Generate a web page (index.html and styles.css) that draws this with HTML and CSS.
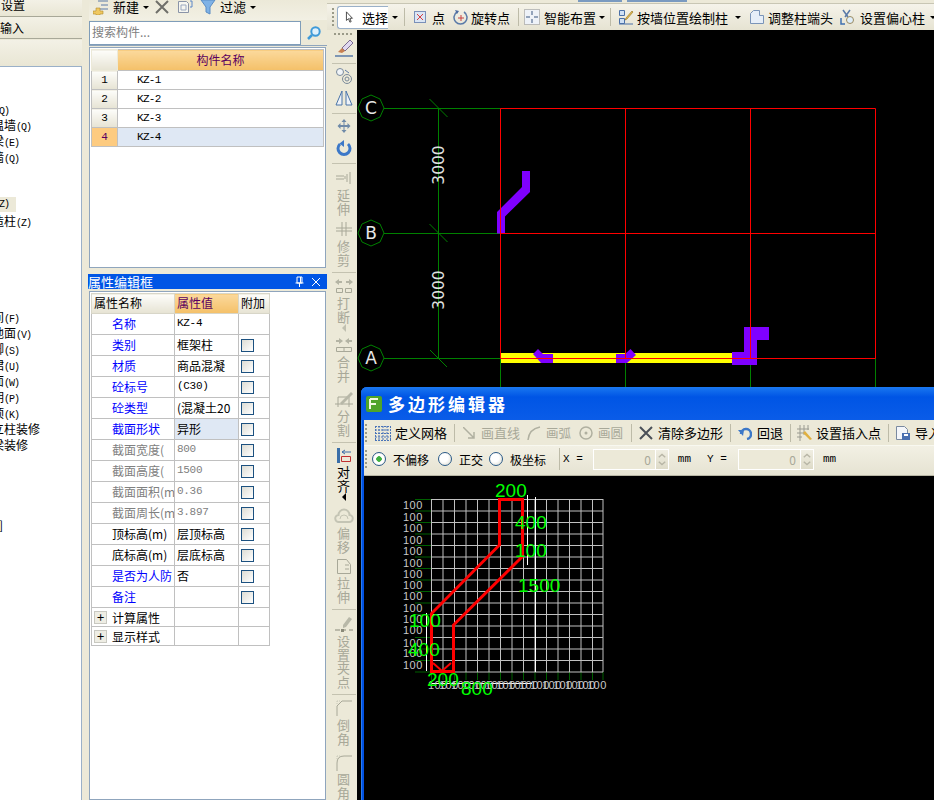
FILE: index.html
```html
<!DOCTYPE html>
<html lang="zh">
<head>
<meta charset="utf-8">
<title>多边形编辑器</title>
<link rel="stylesheet" href="styles.css">
</head>
<body>
<div class="app">
  <aside class="left">
    <div class="tab tab-a"><span>设置</span></div>
    <div class="tab tab-b"><span>输入</span></div>
    <div class="tab tab-c"></div>
    <div class="tree">
      <div class="row clip-b"><span class="lat">Q)</span></div>
      <div class="row clip-a">温墙<span class="lat">(Q)</span></div>
      <div class="row clip-a">梁<span class="lat">(E)</span></div>
      <div class="row clip-a">墙<span class="lat">(Q)</span></div>
      <div class="row"></div><div class="row"></div>
      <div class="row clip-b"><span class="sel lat">Z)</span></div>
      <div class="row clip-a">造柱<span class="lat">(Z)</span></div>
      <div class="row"></div><div class="row"></div><div class="row"></div><div class="row"></div><div class="row"></div>
      <div class="row clip-a">间<span class="lat">(F)</span></div>
      <div class="row clip-a">地面<span class="lat">(V)</span></div>
      <div class="row clip-a">脚<span class="lat">(S)</span></div>
      <div class="row clip-a">裙<span class="lat">(U)</span></div>
      <div class="row clip-a">面<span class="lat">(W)</span></div>
      <div class="row clip-a">期<span class="lat">(P)</span></div>
      <div class="row clip-a">顶<span class="lat">(K)</span></div>
      <div class="row clip-a">立柱装修</div>
      <div class="row clip-a">梁装修</div>
      <div class="row"></div><div class="row"></div><div class="row"></div><div class="row"></div>
      <div class="row clip-b">]</div>
    </div>
  </aside>

  <section class="mid">
    <div class="mid-bar">
      <svg class="ic16" viewBox="0 0 16 16"><path d="M5 2h10M8 6h7M5 10h10" stroke="#5a7aa8" fill="none"/><path d="M3 9h4v3h3v3H7v1H3v-1H0v-3h3z" fill="#f0c860" stroke="#b08a30" stroke-width=".6"/></svg>
      <span class="mb-text">新建</span><i class="caret"></i>
      <svg class="ic14 gap-x" viewBox="0 0 14 14"><path d="M1 1l12 12M13 1L1 13" stroke="#6f6f6a" stroke-width="2"/></svg>
      <svg class="ic16 gap-c" viewBox="0 0 16 16"><path d="M1.500 2.500h8l2 2v9h-10z" fill="#f6f6f0" stroke="#8a94a8"/><path d="M4 6h5v5H4z" fill="none" stroke="#9aa8c0"/><path d="M13 2h2v6h-2" fill="none" stroke="#5b86c8"/></svg>
      <svg class="ic16 gap-f" viewBox="0 0 16 16"><path d="M1 1h14L10 8v7l-4-2V8z" fill="#7fb2e6" stroke="#5a8cc4"/></svg>
      <span class="mb-text">过滤</span><i class="caret"></i>
    </div>
    <div class="search">
      <div class="search-input">搜索构件...</div>
      <div class="search-btn"><svg class="ic16" viewBox="0 0 16 16"><circle cx="9.500" cy="6.500" r="4.200" fill="#dff0fb" stroke="#3f9ad8" stroke-width="2"/><path d="M6 10l-4 4" stroke="#3f9ad8" stroke-width="2.500"/></svg></div>
    </div>
    <div class="list-panel">
      <table class="list">
        <tr><th class="corner"></th><th class="head">构件名称</th></tr>
        <tr><td class="num">1</td><td class="name">KZ-1</td></tr>
        <tr><td class="num">2</td><td class="name">KZ-2</td></tr>
        <tr><td class="num">3</td><td class="name">KZ-3</td></tr>
        <tr><td class="num cur">4</td><td class="name curname">KZ-4</td></tr>
      </table>
    </div>
    <div class="title-bar">
      <span>属性编辑框</span>
      <svg class="pin" viewBox="0 0 12 12"><path d="M4 1h5v6H4zM2.500 7h8M6.500 7v4M7.500 1v6" stroke="#fff" fill="none"/></svg>
      <svg class="pin" viewBox="0 0 12 12"><path d="M2 2l8 8M10 2l-8 8" stroke="#fff"/></svg>
    </div>
    <div class="prop-panel">
      <table class="prop">
        <colgroup><col class="c1"><col class="c2"><col class="c3"></colgroup>
        <tr class="ph"><th class="p-corner">属性名称</th><th class="head">属性值</th><th class="p-corner">附加</th></tr>
        <tr><td class="k blue">名称</td><td class="v mono">KZ-4</td><td></td></tr>
        <tr><td class="k blue">类别</td><td class="v">框架柱</td><td><i class="cb"></i></td></tr>
        <tr><td class="k blue">材质</td><td class="v">商品混凝</td><td><i class="cb"></i></td></tr>
        <tr><td class="k blue">砼标号</td><td class="v mono">(C30)</td><td><i class="cb"></i></td></tr>
        <tr><td class="k blue">砼类型</td><td class="v">(混凝土20</td><td><i class="cb"></i></td></tr>
        <tr><td class="k blue">截面形状</td><td class="v active">异形</td><td><i class="cb"></i></td></tr>
        <tr><td class="k grey">截面宽度(</td><td class="v mono grey">800</td><td><i class="cb"></i></td></tr>
        <tr><td class="k grey">截面高度(</td><td class="v mono grey">1500</td><td><i class="cb"></i></td></tr>
        <tr><td class="k grey">截面面积(m</td><td class="v mono grey">0.36</td><td><i class="cb"></i></td></tr>
        <tr><td class="k grey">截面周长(m</td><td class="v mono grey">3.897</td><td><i class="cb"></i></td></tr>
        <tr><td class="k">顶标高(m)</td><td class="v">层顶标高</td><td><i class="cb"></i></td></tr>
        <tr><td class="k">底标高(m)</td><td class="v">层底标高</td><td><i class="cb"></i></td></tr>
        <tr><td class="k blue">是否为人防</td><td class="v">否</td><td><i class="cb"></i></td></tr>
        <tr><td class="k blue">备注</td><td class="v"></td><td><i class="cb"></i></td></tr>
        <tr class="short"><td class="exp"><div class="exp-in"><i class="plus">+</i>计算属性</div></td><td></td><td></td></tr>
        <tr class="short"><td class="exp"><div class="exp-in"><i class="plus">+</i>显示样式</div></td><td></td><td></td></tr>
      </table>
    </div>
  </section>

  <section class="right">
    <div class="top-strip"><i class="blip b1"></i><i class="blip b2"></i></div>
    <div class="top-bar">
      <i class="grip"></i>
      <div class="sel-btn"><svg class="ic12" viewBox="0 0 12 14"><path d="M3 1v10l2.500-2 1.500 4 1.500-.6L7 8.500h3z" fill="#fff" stroke="#333"/></svg><span>选择</span></div>
      <i class="caret c-sel"></i><i class="sep s-a"></i>
      <svg class="ic12" viewBox="0 0 12 12"><rect x=".5" y=".5" width="11" height="11" fill="#dbe6f4" stroke="#7a90b8"/><path d="M3 3l6 6M9 3l-6 6" stroke="#d84040"/></svg>
      <span class="tt m-6">点</span>
      <svg class="ic16 m-rot" viewBox="0 0 16 16"><path d="M4 3a6.500 6.500 0 1 0 7 0" fill="none" stroke="#5a7aa8" stroke-width="1.500"/><path d="M8 6v6M5 9h6" stroke="#c84040"/><path d="M2 1l4 1-2 3z" fill="#4a6aa0"/></svg>
      <span class="tt m-2">旋转点</span><i class="sep s-b"></i>
      <svg class="ic16" viewBox="0 0 16 16"><rect x=".5" y=".5" width="15" height="15" fill="#eef2f8" stroke="#8a8a8a" stroke-dasharray="1 1"/><path d="M8 2v4M8 10v4M2 8h4M10 8h4" stroke="#39557f"/></svg>
      <span class="tt m-4">智能布置</span><i class="caret c-a"></i><i class="sep s-c"></i>
      <svg class="ic16" viewBox="0 0 16 16"><path d="M1.500 1.500h5v5h-5zM1.500 9.500h5v5h-5z" fill="#cfe0f4" stroke="#4a70a8"/><path d="M1 15h14" stroke="#4a70a8"/><path d="M8 9l6-7 1 1-6 7-2 1z" fill="#e8c050" stroke="#8a6a20" stroke-width=".6"/></svg>
      <span class="tt m-3">按墙位置绘制柱</span><i class="caret c-b"></i>
      <svg class="ic16 m-adj" viewBox="0 0 16 16"><path d="M1.500 4.500l3-3h6v5h4v8h-13z" fill="#e6eef8" stroke="#7a94b8"/></svg>
      <span class="tt m-3">调整柱端头</span>
      <svg class="ic16 m-set" viewBox="0 0 16 16"><path d="M3 1l5 7M10 1L5 8" stroke="#5a7aa8" stroke-width="1.500"/><circle cx="10" cy="11" r="3.500" fill="#dfeefa" stroke="#9a8a60"/><path d="M1 9v6h4" fill="none" stroke="#3f70b0" stroke-width="1.500"/></svg>
      <span class="tt m-4">设置偏心柱</span><i class="caret c-c"></i>
    </div>
    <div class="work">
      <nav class="vbar">
        <i class="vgrip"></i>
        <div class="vb"><svg class="vi" viewBox="0 0 20 20"><path d="M8 10l8-8 3 3-8 8z" fill="#e0d8f0" stroke="#7a6a90"/><path d="M4 14l4-4 3 3-3 2z" fill="#c88050"/><path d="M1 18h18" stroke="#5a7aa8" stroke-width="1.500"/></svg></div>
        <i class="vsep"></i>
        <div class="vb"><svg class="vi" viewBox="0 0 20 20"><circle cx="6" cy="6" r="3.500" fill="#f0f4f8" stroke="#7a8a9a"/><path d="M11 4l4 3" stroke="#5a7aa8"/><circle cx="13" cy="13" r="4.500" fill="none" stroke="#7a8a9a"/><circle cx="13" cy="13" r="2" fill="none" stroke="#7a8a9a"/></svg></div>
        <div class="vb"><svg class="vi" viewBox="0 0 20 20"><path d="M8 3L2 17h6zM12 3l6 14h-6z" fill="#eef2f8" stroke="#4a74a8"/></svg></div>
        <i class="vsep"></i>
        <div class="vb"><svg class="vi" viewBox="0 0 20 20"><path d="M10 3l2.500 3h-2v3h3V7l3 3-3 3v-2h-3v3h2L10 17l-2.500-3h2v-3h-3v2l-3-3 3-3v2h3V6h-2z" fill="#6f8aa8"/></svg></div>
        <div class="vb"><svg class="vi" viewBox="0 0 20 20"><path d="M6 6a6 6 0 1 0 8 0" fill="none" stroke="#3c78c8" stroke-width="3"/><path d="M10 2v7L5.500 5.500z" fill="#3c78c8"/></svg></div>
        <i class="vsep"></i>
        <div class="vb off mt2"><svg class="vi" viewBox="0 0 20 20"><path d="M2 8h8M2 11h8M13 6v8M16 4v12M11 8v3" stroke="#a8a898" fill="none"/></svg><b>延伸</b></div>
        <div class="vb off mt1"><svg class="vi" viewBox="0 0 20 20"><path d="M2 9h16M2 12h16" stroke="#a8a898"/><path d="M8 3v14M12 3v14" stroke="#a8a898"/></svg><b>修剪</b></div>
        <i class="vsep"></i>
        <div class="vb off mt1"><svg class="vi" viewBox="0 0 20 20"><path d="M1 6l4-3v2h3v2H5v2zM19 6l-4-3v2h-3v2h3v2z" fill="#b4b4a4"/><path d="M2.500 12.500h6v4h-6zM11.500 12.500h6v4h-6z" fill="none" stroke="#a8a898"/></svg><b>打断</b><i class="vcaret"></i></div>
        <div class="vb off"><svg class="vi" viewBox="0 0 20 20"><path d="M9 6L5 3v2H2v2h3v2zM11 6l4-3v2h3v2h-3v2z" fill="#b4b4a4"/><path d="M2.500 12.500h15v4h-15zM10 12v5" fill="none" stroke="#a8a898"/></svg><b>合并</b></div>
        <div class="vb off mt4"><svg class="vi" viewBox="0 0 20 20"><path d="M1 15h18M4 8h11M4 8v10M15 8v10" stroke="#a8a898" fill="none"/><path d="M6 14L17 3l2 2-11 11z" fill="#b8b8a8"/></svg><b>分割</b></div>
        <i class="vsep"></i>
        <div class="vb on"><svg class="vi" viewBox="0 0 20 20"><path d="M3 3h3v15H3z" fill="#3a6ea8"/><path d="M8 7h9M8 7l3-2M8 7l3 2" stroke="#3a6ea8" fill="none"/><path d="M7.500 11.500h9v5h-9z" fill="none" stroke="#c03030"/></svg><b>对齐</b><i class="vcaret dark"></i></div>
        <div class="vb off mt2"><svg class="vi" viewBox="0 0 20 20"><path d="M5 16a3.500 3.500 0 0 1-.5-7 5.500 5.500 0 0 1 11 0 3.500 3.500 0 0 1-.5 7z" fill="none" stroke="#c4c4b4" stroke-width="2"/><path d="M6 13a4 4 0 0 1 8 0" fill="none" stroke="#c4c4b4"/></svg><b>偏移</b></div>
        <div class="vb off"><svg class="vi" viewBox="0 0 20 20"><path d="M3.500 3.500h9l4 5v9h-13z" fill="none" stroke="#a8a898"/><path d="M11 9h4M11 13h4" stroke="#a8a898"/></svg><b>拉伸</b></div>
        <i class="vsep"></i>
        <div class="vb off mt2"><svg class="vi" viewBox="0 0 20 20"><path d="M9 11l6-8 3 2-6 8-3 1z" fill="#b8b8a8"/><path d="M1 16h5M9 16h3M15 16h4" stroke="#8a8a7a"/><rect x="7" y="15" width="3" height="3" fill="#8a8a7a"/></svg><b>设置夹点</b></div>
        <i class="vsep"></i>
        <div class="vb off mt1"><svg class="vi" viewBox="0 0 20 20"><path d="M3 18V8l5-5h10" fill="none" stroke="#a8a898"/><path d="M3 3h4M3 3v4" stroke="#c8c8b8" stroke-dasharray="1 1"/></svg><b>倒角</b></div>
        <div class="vb off mt4"><svg class="vi" viewBox="0 0 20 20"><path d="M3 19V11q0-7 7-7h8" fill="none" stroke="#a8a898"/><path d="M3 4h4M3 4v4" stroke="#c8c8b8" stroke-dasharray="1 1"/></svg><b>圆角</b></div>
      </nav>
      <div class="canvas">
        <svg class="plan" viewBox="357 30 577 770">
          <g stroke="#008000" fill="none">
            <path d="M384 108.500H501M384 233.500H501M384 358.500H501M438.500 108V358M500.500 358V390M625.500 358V390M750.500 358V390M875.500 358V390"/>
            <path d="M429.500 99l18 18M429.500 224l18 18M430 350l17 17"/>
            <path d="M371 95l9 4 4 9-4 9-9 4-9-4-4-9 4-9zM371 220l9 4 4 9-4 9-9 4-9-4-4-9 4-9zM371 345l9 4 4 9-4 9-9 4-9-4-4-9 4-9z"/>
          </g>
          <rect x="501" y="353" width="232" height="10" fill="#ffff00"/>
          <g fill="#7f00ff">
            <path d="M522 171h8v21l-25 24.500v17h-8V212l25-25z"/>
            <path d="M744 327h25v13h-12v25h-25v-13h12z"/>
            <path d="M538 349l-5 5 8 9h12v-9h-10z"/>
            <path d="M630.500 349l5.500 6-9 8h-11v-9h9z"/>
          </g>
          <path d="M500.500 108.500H875.500V358.500H500.500zM625.500 108V358M750.500 108V358M500 233.500H875" fill="none" stroke="#ff0000"/>
          <g class="axis-t">
            <text x="371" y="114">C</text><text x="371" y="239">B</text><text x="371" y="364">A</text>
          </g>
          <g class="dim-t">
            <text transform="translate(444 165) rotate(-90)">3000</text>
            <text transform="translate(444 290) rotate(-90)">3000</text>
          </g>
        </svg>
      </div>
    </div>

    <div class="dialog">
      <header class="dlg-title">
        <svg class="dlg-logo" viewBox="0 0 16 16"><rect width="16" height="16" rx="2" fill="#4fa428"/><path d="M4 3v10M4 8h6M4 3h8" stroke="#f0f8e0" stroke-width="2" fill="none"/></svg>
        <span>多边形编辑器</span>
      </header>
      <div class="dlg-bar b-1">
        <i class="grip"></i>
        <svg class="ic16 d-grid" viewBox="0 0 16 16"><path d="M.5 1v14M4 1v14M8 1v14M12 1v14M15.500 1v14M0 1.500h16M0 5h16M0 8.500h16M0 12h16M0 15.500h16" stroke="#4a74b8" stroke-dasharray="2 1"/></svg>
        <span class="tt m-4">定义网格</span><i class="sep s-d"></i>
        <svg class="ic12" viewBox="0 0 12 12"><path d="M0 0l11 11M11 5v6H5" stroke="#b0b0a0" fill="none" stroke-width="1.500"/></svg>
        <span class="tt dim m-6">画直线</span>
        <svg class="ic14 d-b" viewBox="0 0 14 14"><path d="M1 14Q2 3 13 1" stroke="#b0b0a0" fill="none" stroke-width="1.500"/></svg>
        <span class="tt dim m-5 ts-12">画弧</span>
        <svg class="ic14 d-c" viewBox="0 0 14 14"><circle cx="7" cy="7" r="6" fill="none" stroke="#b0b0a0" stroke-width="1.500"/><circle cx="7" cy="7" r="1.500" fill="#b0b0a0"/></svg>
        <span class="tt dim m-5 ts-12">画圆</span><i class="sep s-e"></i>
        <svg class="ic14" viewBox="0 0 14 14"><path d="M1 1l12 12M13 1L1 13" stroke="#4a5058" stroke-width="2"/></svg>
        <span class="tt m-5">清除多边形</span><i class="sep s-f"></i>
        <svg class="ic14" viewBox="0 0 14 14"><path d="M3 8a5 5 0 1 1 6 5" fill="none" stroke="#3c78c8" stroke-width="2.500"/><path d="M0 4l6 0-1 6z" fill="#3c78c8"/></svg>
        <span class="tt m-5">回退</span><i class="sep s-g"></i>
        <svg class="ic16" viewBox="0 0 16 16"><path d="M3 0v16M7 0v10M11 0v5M0 4h12M0 8h8M0 12h5" stroke="#9a9a90"/><path d="M8 6l7 8-2 1-7-7z" fill="#e0b040"/></svg>
        <span class="tt m-3">设置插入点</span><i class="sep s-h"></i>
        <svg class="ic16" viewBox="0 0 16 16"><path d="M1.500 1.500h8l3 3v10h-11z" fill="#f4f6fa" stroke="#7a8aa0"/><rect x="7" y="8" width="8" height="7" fill="#4a70b0"/><rect x="9" y="9" width="4" height="2" fill="#fff"/></svg>
        <span class="tt m-4">导入</span>
      </div>
      <div class="dlg-bar b-2">
        <i class="grip"></i>
        <i class="radio checked r-1"></i><span class="tt12 m-7">不偏移</span>
        <i class="radio r-2"></i><span class="tt12 m-7">正交</span>
        <i class="radio r-3"></i><span class="tt12 m-7">极坐标</span>
        <i class="sep s-i"></i>
        <span class="lbl">X =</span>
        <div class="spin"><span>0</span><svg class="arrows" viewBox="0 0 13 19"><path d="M3 7l3.500-3L10 7M3 12l3.500 3L10 12" fill="none" stroke="#b8b6a6" stroke-width="1.500"/></svg></div>
        <span class="lbl u-1">mm</span>
        <span class="lbl u-2">Y =</span>
        <div class="spin"><span>0</span><svg class="arrows" viewBox="0 0 13 19"><path d="M3 7l3.500-3L10 7M3 12l3.500 3L10 12" fill="none" stroke="#b8b6a6" stroke-width="1.500"/></svg></div>
        <span class="lbl u-1">mm</span>
      </div>
      <div class="dlg-canvas">
        <svg class="plan" viewBox="364 476 570 324">
          <path d="M415 499.500h16M415 511h16M415 522.500h16M415 534h16M415 545.500h16M415 557h16M415 568.500h16M415 580h16M415 591.500h16M415 603h16M415 614.500h16M415 626h16M415 637.500h16M415 649h16M415 660.500h16M415 672h16M431.500 672v8M443 672v8M454.500 672v8M466 672v8M477.500 672v8M489 672v8M500.500 672v8M512 672v8M523.500 672v8M535 672v8M546.500 672v8M558 672v8M569.500 672v8M581 672v8M592.500 672v8M603 672v8" stroke="#006000"/>
          <path d="M431.500 499v173M443 499v173M454.500 499v173M466 499v173M477.500 499v173M489 499v173M500.500 499v173M512 499v173M523.500 499v173M535 499v173M546.500 499v173M558 499v173M569.500 499v173M581 499v173M592.500 499v173M603 499v173M431 499.500h172M431 511h172M431 522.500h172M431 534h172M431 545.500h172M431 557h172M431 568.500h172M431 580h172M431 591.500h172M431 603h172M431 614.500h172M431 626h172M431 637.500h172M431 649h172M431 660.500h172M431 672h172" stroke="#c0c0c0"/>
          <path d="M535.500 497v175M527.500 495v70M426.500 613v58M432 683.500h100" stroke="#fff" fill="none"/>
          <path d="M499.500 499.500H522.500V556.500L453.500 625V671.500H431.500V613.500L499.500 545Z" fill="none" stroke="#ff0000" stroke-width="3"/>
          <path d="M433 663l9 8 9-8" fill="none" stroke="#ff0000" stroke-width="2"/>
          <g class="ylab">
            <text x="403" y="509">100</text><text x="403" y="521">100</text><text x="403" y="532">100</text><text x="403" y="544">100</text><text x="403" y="555">100</text><text x="403" y="567">100</text><text x="403" y="578">100</text><text x="403" y="589">100</text><text x="403" y="600">100</text><text x="403" y="612">100</text><text x="403" y="623">100</text><text x="403" y="634">100</text><text x="403" y="647">100</text><text x="403" y="657">100</text><text x="403" y="669">100</text>
            <text x="428" y="689">100</text><text x="439" y="689">100</text><text x="451" y="689">100</text><text x="462" y="689">100</text><text x="474" y="689">100</text><text x="485" y="689">100</text><text x="496" y="689">100</text><text x="508" y="689">100</text><text x="519" y="689">100</text><text x="530" y="689">100</text><text x="542" y="689">100</text><text x="553" y="689">100</text><text x="565" y="689">100</text><text x="576" y="689">100</text><text x="587" y="689">100</text>
          </g>
          <g class="glab">
            <text x="495" y="497">200</text><text x="515" y="529">400</text><text x="515" y="557">100</text><text x="518" y="592">1500</text><text x="409" y="627">100</text><text x="408" y="656">400</text><text x="427" y="686">200</text><text x="461" y="695">800</text>
          </g>
        </svg>
      </div>
    </div>
  </section>
</div>
</body>
</html>
```
FILE: styles.css
```css
* { box-sizing: border-box; }
html, body { margin: 0; padding: 0; height: 100%; overflow: hidden; }
body { font-family: "Noto Sans CJK SC", "Liberation Sans", sans-serif; font-size: 12px; color: #000; background: #ece9d8; }
i { font-style: normal; display: block; flex: none; }
svg { display: block; flex: none; }
.app { display: flex; width: 934px; height: 800px; overflow: hidden; background: #ece9d8; position: relative; }

/* left tree */
.left { width: 82px; flex: none; display: flex; flex-direction: column; overflow: hidden; }
.tab { width: 82px; background: linear-gradient(#f3f1e6, #e9e6d4); border-bottom: 1px solid #a8a898; font-size: 12px; display: flex; overflow: hidden; }
.tab-a { height: 17px; align-items: flex-end; }
.tab-a span { line-height: 12px; margin-bottom: 5px; padding-left: 1px; }
.tab-b { height: 22px; align-items: center; }
.tab-c { height: 27px; margin-top: 1px; border-bottom: 1px solid #9ab0c8; }
.tree { flex: 1; background: #fff; padding-top: 34px; border-right: 1px solid #9ab0c8; overflow: hidden; }
.row { height: 16px; line-height: 16px; font-size: 12px; white-space: nowrap; }
.lat { font-family: "Liberation Mono", monospace; font-size: 10px; letter-spacing: -1px; }
.clip-a { margin-left: -8px; }
.clip-b { margin-left: -1px; }
.sel { display: inline-block; background: #ece9d8; width: 17px; height: 15px; line-height: 15px; vertical-align: top; }

/* middle */
.mid { width: 245px; flex: none; padding-left: 6px; display: flex; flex-direction: column; }
.mid-bar { height: 20px; margin-left: 1px; padding: 0 0 6px 4px; display: flex; align-items: center; background: linear-gradient(#ece9d8, #f2f0e4); overflow: hidden; }
.mb-text { font-size: 13px; margin-left: 4px; line-height: 14px; }
.caret { width: 0; height: 0; border: 3px solid transparent; border-top: 3px solid #000; border-bottom: 0; margin-left: 4px; }
.ic16 { width: 16px; height: 16px; }
.ic14 { width: 14px; height: 14px; }
.ic12 { width: 12px; height: 12px; }
.gap-x { margin-left: 6px; }
.gap-c { margin-left: 8px; }
.gap-f { margin-left: 7px; }
.search { height: 25px; margin-top: 1px; margin-left: 1px; display: flex; border-bottom: 1px solid #8fa5bd; }
.search-input { width: 212px; height: 24px; border: 1px solid #7f9db9; background: #fff; color: #808080; font-size: 12px; line-height: 20px; padding-left: 2px; }
.search-btn { width: 25px; display: flex; justify-content: center; align-items: center; }
.list-panel { margin-top: 1px; margin-left: 1px; width: 237px; height: 221px; background: #fff; border: 1px solid #8fa5bd; padding: 1px 1px; }
table { border-collapse: collapse; table-layout: fixed; }
.list { width: 233px; }
.list th, .list td { padding: 0 0 1px; border: 1px solid #c0c0c0; }
.list th { height: 21px; font-weight: normal; }
.list td { height: 19px; }
.corner { width: 26px; background: linear-gradient(#fdfdfa, #e6e3d3); border-color: #ece9d8 !important; }
.head { background: linear-gradient(#fbd99c, #f4c068); color: #5a0060; text-align: center; font-size: 12px; font-weight: normal; }
.num { text-align: center; background: linear-gradient(#fdfdfa, #e6e3d3); font-family: "Liberation Mono", monospace; font-size: 11px; }
.name { padding-left: 19px !important; font-family: "Liberation Mono", monospace; font-size: 11px; letter-spacing: -.7px; }
.cur { background: #fdcb80; color: #5a0060; }
.curname { background: #dfe8f4; }
.title-bar { margin-top: 6px; width: 239px; height: 15px; background: #0055e5; color: #fff; font-size: 13px; line-height: 15px; display: flex; align-items: center; flex: none; }
.title-bar span { flex: 1; }
.pin { width: 12px; height: 12px; margin-right: 5px; }
.prop-panel { margin-top: 2px; margin-left: 1px; width: 237px; flex: 1; background: #fff; border: 1px solid #8fa5bd; padding: 1px; overflow: hidden; }
.prop { width: 178px; }
.c1 { width: 83px; } .c2 { width: 64px; } .c3 { width: 31px; }
.prop th, .prop td { height: 21px; padding: 0 0 2px; border: 1px solid #c0c0c0; font-weight: normal; white-space: nowrap; overflow: hidden; font-size: 12px; text-align: left; }
.prop .ph th { height: 20px; border-color: #d8d6c8; }
.prop .ph .head { text-align: left; padding-left: 2px; }
.p-corner { background: linear-gradient(#fdfdfa, #e6e3d3); padding-left: 2px !important; }
.prop .k { padding-left: 20px; }
.prop .v { padding-left: 2px; }
.prop .short td { height: 19px; padding: 0; }
.exp-in { display: flex; align-items: center; padding-left: 2px; }
.blue { color: #0000ff; }
.grey { color: #808080; }
.mono { font-family: "Liberation Mono", "Noto Sans CJK SC", monospace; font-size: 11px !important; letter-spacing: -.3px; }
.active { background: #dfe8f4; }
.cb { width: 13px; height: 13px; margin: 2px 0 0 2px; border: 1px solid #1c5180; background: linear-gradient(135deg, #dcdcd4, #fff); }
.plus { width: 13px; height: 13px; margin-right: 5px; background: #eeede4; border: 1px solid #c8c8c0; text-align: center; line-height: 10px; font-size: 13px; }

/* right */
.right { flex: 1; display: flex; flex-direction: column; position: relative; min-width: 0; }
.top-strip { height: 4px; display: flex; border-bottom: 1px solid #c8c6b4; flex: none; }
.blip { height: 2px; background: #7a9ac0; width: 44px; margin-left: 251px; }
.blip.b2 { width: 60px; margin-left: 5px; }
.top-bar { height: 26px; padding-left: 5px; display: flex; align-items: center; background: linear-gradient(#f5f3ea, #e6e3d2); flex: none; white-space: nowrap; overflow: hidden; font-size: 13px; }
.grip { width: 2px; height: 18px; margin-right: 3px; background: repeating-linear-gradient(#9a9a88 0 2px, transparent 2px 4px); }
.sel-btn { width: 52px; height: 23px; background: #fff; border: 1px solid #9ab0c8; border-right: 0; border-radius: 3px 0 0 3px; display: flex; align-items: center; padding-left: 5px; gap: 7px; font-size: 13px; }
.c-sel { margin-left: 4px; }
.sep { width: 1px; height: 18px; background: #bdbba8; }
.s-a { margin: 0 9px 0 6px; }
.s-b { margin: 0 5px 0 8px; }
.s-c { margin: 0 7px 0 5px; }
.s-d { margin: 0 8px 0 7px; }
.s-e { margin: 0 7px 0 8px; }
.s-f { margin: 0 7px 0 7px; }
.s-g { margin: 0 6px 0 7px; }
.s-h { margin: 0 6px 0 7px; }
.s-i { margin: 0 3px 0 13px; height: 22px; }
.tt { font-size: 13px; white-space: nowrap; }
.tt12 { font-size: 12px; white-space: nowrap; }
.ts-12 { font-size: 12.500px; }
.dim { color: #a8a898; }
.m-2 { margin-left: 2px; } .m-3 { margin-left: 3px; } .m-4 { margin-left: 4px; } .m-5 { margin-left: 5px; } .m-6 { margin-left: 6px; } .m-7 { margin-left: 7px; }
.m-rot { margin-left: 8px; }
.c-a { margin-left: 3px; }
.c-b { margin-left: 7px; }
.c-c { margin-left: 5px; }
.m-adj { margin-left: 8px; }
.m-set { margin-left: 7px; }

.work { flex: 1; display: flex; min-height: 0; }
.vbar { width: 30px; flex: none; padding-left: 3px; display: flex; flex-direction: column; align-items: center; background: #ece9d8; overflow: hidden; }
.vgrip { width: 20px; height: 2px; margin-top: 3px; margin-bottom: 3px; background: repeating-linear-gradient(90deg, #9a9a88 0 2px, transparent 2px 4px); }
.vsep { width: 24px; height: 1px; background: #c4c2b0; margin: 3px 0 2px; flex: none; }
.vb { display: flex; flex-direction: column; align-items: center; flex: none; margin-bottom: 2px; }
.vb.off, .vb.on { margin-bottom: 3px; }
.mt1 { margin-top: 1px; }
.mt2 { margin-top: 2px; }
.mt4 { margin-top: 4px; }
.vi { width: 20px; height: 20px; }
.vb b { font-weight: normal; width: 14px; font-size: 13px; line-height: 13.500px; text-align: center; word-break: break-all; }
.vb.off b { color: #a8a898; }
.vb.on b { color: #000; }
.vcaret { width: 0; height: 0; border: 4px solid transparent; border-right: 4px solid #c0c0b0; border-left: 0; margin-top: 1px; }
.vcaret.dark { border-right-color: #000; }
.canvas { flex: 1; background: #000; min-width: 0; }
.plan { width: 100%; height: 100%; }
.axis-t text { fill: #e8e8e8; font: 17px "DejaVu Sans", sans-serif; text-anchor: middle; }
.dim-t text { fill: #e0e0e0; font: 15.500px "DejaVu Sans", sans-serif; text-anchor: middle; }

/* dialog window */
.dialog { position: absolute; left: 34px; top: 387px; width: 573px; height: 413px; background: #0050e0; border-radius: 6px 0 0 0; padding-left: 3px; display: flex; flex-direction: column; overflow: hidden; box-shadow: inset 1px 0 0 #2a7cf0; }
.dlg-title { height: 33px; margin-left: -3px; padding-left: 5px; display: flex; align-items: center; gap: 6px; background: linear-gradient(#1a78f0, #0055e5 30%, #0a5ce8); color: #fff; font-size: 17px; font-weight: bold; letter-spacing: 3px; flex: none; }
.dlg-logo { width: 16px; height: 16px; }
.dlg-bar { display: flex; align-items: center; background: #ece9d8; flex: none; white-space: nowrap; overflow: hidden; padding-left: 1px; }
.b-1 { height: 26px; border-bottom: 1px solid #f8f8f0; }
.b-2 { height: 30px; padding-bottom: 3px; border-bottom: 1px solid #b8b6a4; background: linear-gradient(#f2f0e4, #e6e3d2); }
.d-grid { margin-left: 5px; }
.d-b { margin-left: 7px; }
.d-c { margin-left: 8px; }
.radio { width: 14px; height: 14px; border-radius: 50%; border: 1px solid #2a5a88; background: radial-gradient(circle at 40% 40%, #fff 40%, #d8d6c8); }
.radio.checked { background: radial-gradient(circle, #40b040 0 2.500px, #fff 3px 5px, #d8d6c8); }
.r-1 { margin-left: 2px; }
.r-2 { margin-left: 9px; }
.r-3 { margin-left: 6px; }
.lbl { font-family: "Liberation Mono", monospace; font-size: 11px; margin-right: 10px; }
.u-1 { margin-left: 9px; margin-right: 0; }
.u-2 { margin-left: 16px; margin-right: 11px; }
.spin { width: 76px; height: 21px; background: #ece9d8; border: 1px solid #fff; display: flex; align-items: center; justify-content: flex-end; color: #a8a898; font-size: 12px; }
.spin span { margin-right: 4px; }
.arrows { width: 13px; height: 19px; background: linear-gradient(#f0eee2, #dedbc8); border-left: 1px solid #fff; }
.dlg-canvas { flex: 1; background: #000; min-height: 0; }
.ylab text { fill: #c8c8c8; font: 11px "Liberation Sans", sans-serif; letter-spacing: .500px; }
.glab text { fill: #00ff00; font: 19px "Liberation Sans", sans-serif; }
```
